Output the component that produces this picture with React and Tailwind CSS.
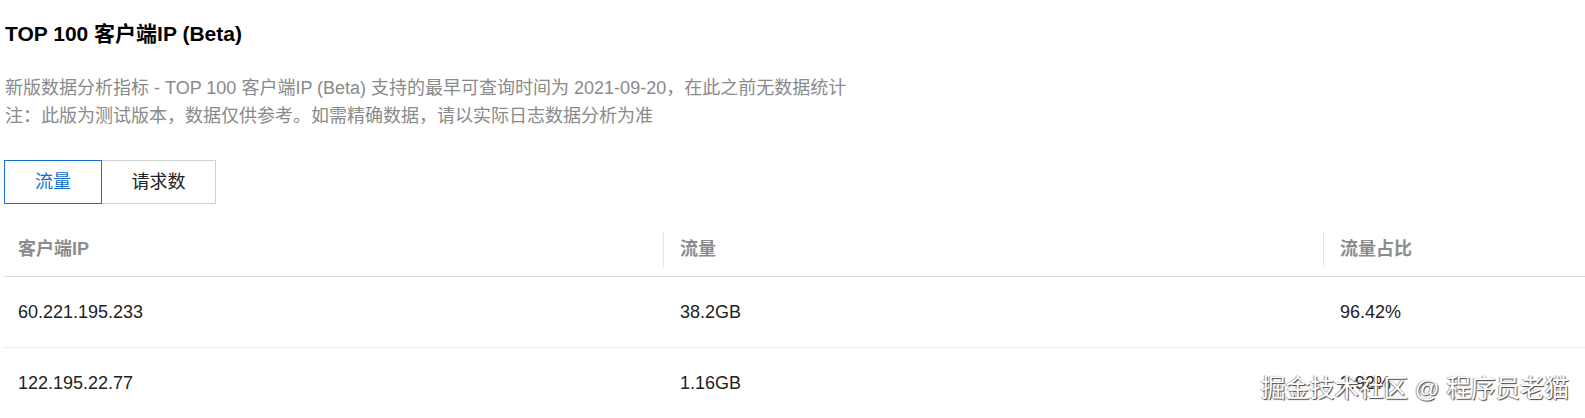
const rows = [
  { ip: '60.221.195.233', flow: '38.2GB', ratio: '96.42%' },
  { ip: '122.195.22.77', flow: '1.16GB', ratio: '2.92%' },
];

export default function App() {
  return (
    <div className="relative h-[418px] overflow-hidden bg-white pl-1 pt-[20px] font-['Liberation_Sans','Noto_Sans_CJK_SC',sans-serif]">
      <h1 className="ml-px text-[21px] leading-[28px] font-bold text-black">TOP 100 客户端IP (Beta)</h1>

      <div className="ml-px mt-[26px] text-[18px] leading-[28px] text-[#8a8a8a]">
        <p>新版数据分析指标 - TOP 100 客户端IP (Beta) 支持的最早可查询时间为 2021-09-20，在此之前无数据统计</p>
        <p>注：此版为测试版本，数据仅供参考。如需精确数据，请以实际日志数据分析为准</p>
      </div>

      {/* Tabs */}
      <div className="mt-[30px] flex text-[18px]">
        <button className="h-[44px] w-[98px] border border-[#1470cc] text-[#1470cc]">流量</button>
        <button className="h-[44px] w-[114px] border border-l-0 border-[#d0d0d0] text-[#222]">请求数</button>
      </div>

      {/* Table */}
      <div className="mt-[18px] text-[18px]">
        <div className="grid h-[55px] grid-cols-[659px_660px_1fr] items-center border-b border-[#dcdcdc] font-bold text-[#8c8c8c]">
          <div className="pl-[14px]">客户端IP</div>
          <div className="flex h-[36px] items-center border-l border-[#e6e6e6] pl-4">流量</div>
          <div className="flex h-[36px] items-center border-l border-[#e6e6e6] pl-4">流量占比</div>
        </div>
        {rows.map((r) => (
          <div key={r.ip} className="grid h-[71px] grid-cols-[659px_660px_1fr] items-center border-b border-[#ececec] text-[#222]">
            <div className="pl-[14px]">{r.ip}</div>
            <div className="pl-[17px]">{r.flow}</div>
            <div className="pl-[17px]">{r.ratio}</div>
          </div>
        ))}
      </div>

      {/* watermark */}
      <div className="absolute bottom-[13px] right-[16px] text-[24.5px] leading-[32px] text-white [text-shadow:1px_1px_1px_#444,-1px_0_1px_#999]">
        掘金技术社区 @ 程序员老猫
      </div>
    </div>
  );
}
